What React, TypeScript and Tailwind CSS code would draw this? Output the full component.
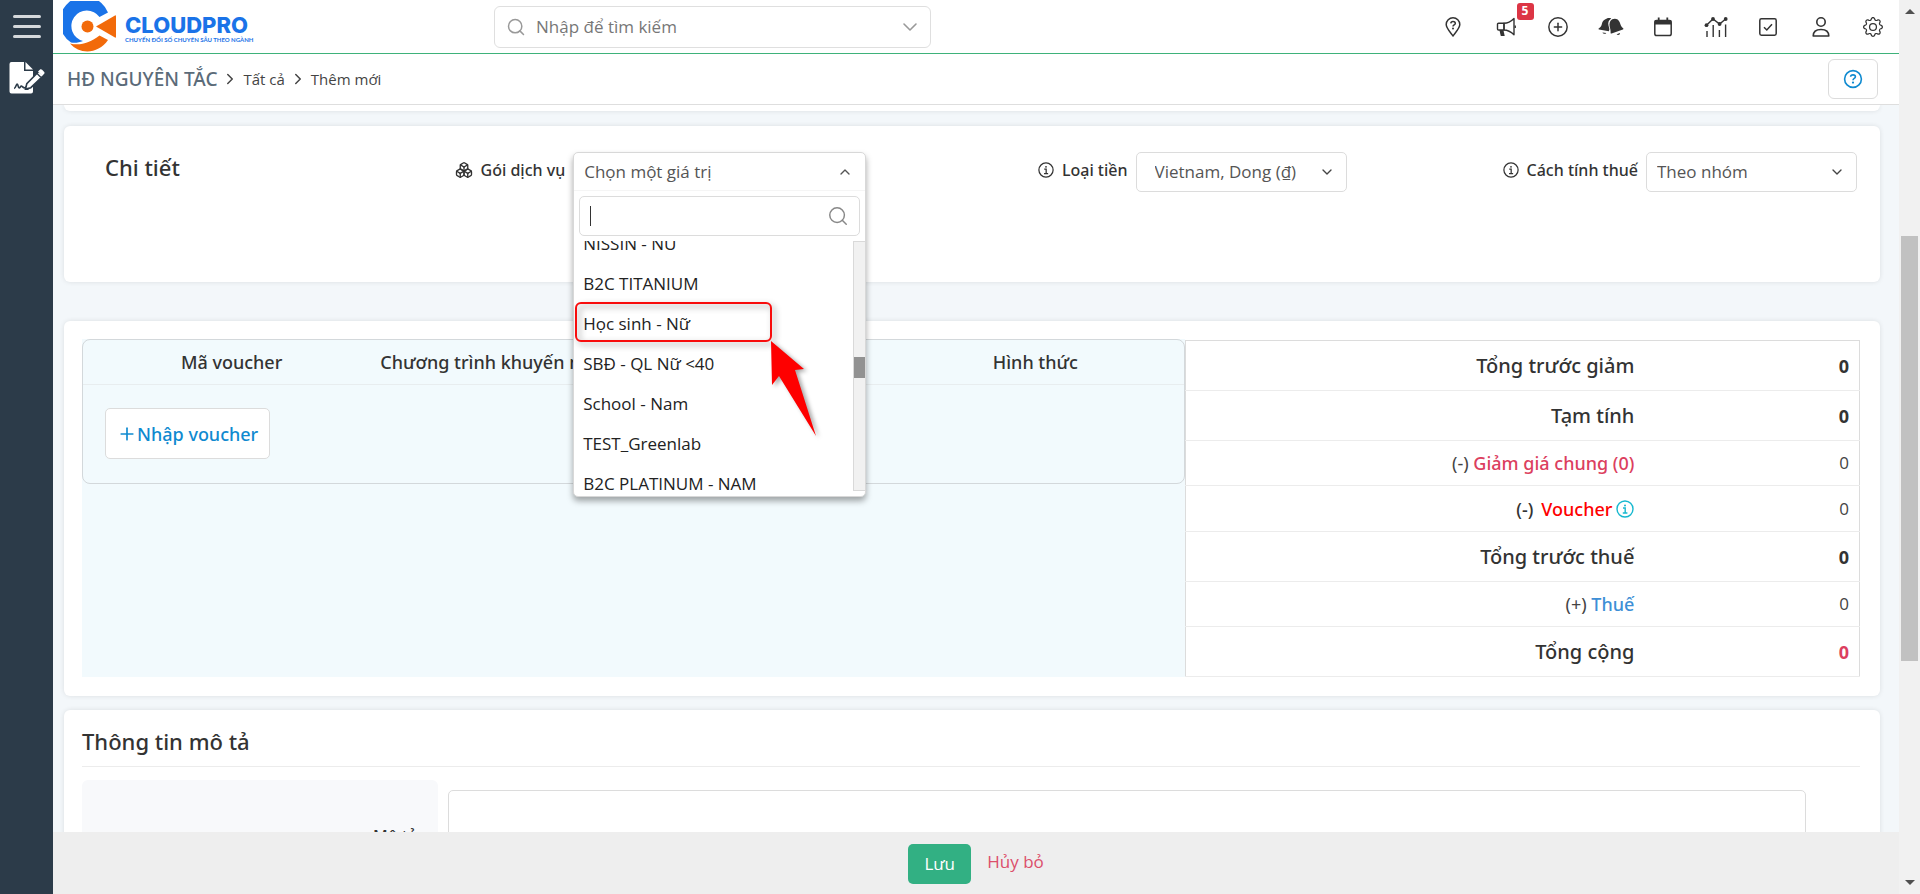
import { useEffect, useRef, useState } from "react";
import type { ReactNode } from "react";
import { Boxes, ChevronDown, ChevronRight, ChevronUp, CirclePlus, Plus, Search } from "lucide-react";
import { BsGear } from "react-icons/bs";

const packages = [
  "NISSIN - NỮ",
  "B2C TITANIUM",
  "Học sinh - Nữ",
  "SBĐ - QL Nữ <40",
  "School - Nam",
  "TEST_Greenlab",
  "B2C PLATINUM - NAM",
];

type IconProps = { className?: string };

const InfoIcon = ({ className }: IconProps) => (
  <svg viewBox="0 0 18 18" fill="none" stroke="currentColor" className={className}>
    <circle cx="9" cy="9" r="8" strokeWidth="1.4" />
    <path d="M7 8h2.2v5M6.8 13h4.6" strokeWidth="1.4" />
    <circle cx="9" cy="5.4" r="1" fill="currentColor" stroke="none" />
  </svg>
);

const HelpIcon = ({ className }: IconProps) => (
  <svg viewBox="0 0 20 20" fill="none" stroke="currentColor" className={className}>
    <circle cx="10" cy="10" r="8.4" strokeWidth="1.6" />
    <path d="M7.6 7.8c.1-1.3 1-1.9 2.4-1.9 1.5 0 2.4.8 2.4 1.9 0 1.6-2.4 1.6-2.4 3.4" strokeWidth="1.6" />
    <circle cx="10" cy="13.6" r="1.1" fill="currentColor" stroke="none" />
  </svg>
);

const PinIcon = () => (
  <svg viewBox="0 0 20 20" fill="none" stroke="currentColor" strokeWidth="1.5" className="size-5">
    <path d="M10 19C8.300 16.500 3.200 11.400 3.200 7.600a6.800 6.800 0 0 1 13.600 0c0 3.800-5.100 8.900-6.800 11.400z" strokeLinejoin="round" />
    <path d="M7.800 6.400c.1-1.300 1-1.900 2.200-1.900 1.400 0 2.300.8 2.300 1.900 0 1.500-2.300 1.500-2.300 3" />
    <circle cx="10" cy="11.400" r="1" fill="currentColor" stroke="none" />
  </svg>
);

const MegaphoneIcon = () => (
  <svg viewBox="0 0 20 20" fill="none" stroke="currentColor" strokeWidth="1.400" strokeLinejoin="round" className="size-5">
    <path d="M8 6.300H2.500a1 1 0 0 0-1 1V12a1 1 0 0 0 1 1H8z" />
    <path d="M8 6.300C12 6.300 15.500 4 18 1.500v16.200C15.500 15.300 12 13 8 13z" />
    <path d="M3.400 13h4l1.300 6H4.800z" fill="currentColor" stroke="none" />
    <path d="M19.200 8.400v2.600" />
  </svg>
);

const BellsIcon = () => (
  <svg viewBox="0 0 26 20" fill="currentColor" className="h-5 w-[26px]">
    <path d="M7 2.600C8.800 1 11 .6 13.200 1.400c-2.600 1.700-3.400 4-2.700 7 .6 2.700 1.500 4 .3 5.900L1 12.400c-.6-.2-.7-.9 0-1.200 2-1 2.500-2.300 3-4.600.4-1.700 1.200-3 3-4z" />
    <path d="M14.200 2.200c3-1.300 6.300-.3 7.400 2.900.9 2.600 1.400 4.700 3.500 6.200.5.400.4 1-.2 1.200l-11.300 4c-.6.200-1.100-.1-1-.8.200-2.100-.4-3.900-.9-6-.7-3 .2-6.300 2.500-7.500z" />
    <path d="M4.500 15.400l3.800.6c-.8 1.300-3 1.100-3.800-.6zM18.600 17.200l3.400-1.300c.2 1.800-2 2.700-3.400 1.300z" />
  </svg>
);

const CalendarIcon = () => (
  <svg viewBox="0 0 20 20" fill="none" className="size-5">
    <rect x="1.800" y="3.600" width="16.400" height="15" rx="1.800" stroke="currentColor" strokeWidth="1.500" />
    <path d="M1.800 3h16.400v4.400H1.800zM4.800.6h1.800V4H4.800zM13.400.6h1.800V4h-1.800z" fill="currentColor" />
  </svg>
);

const ChartIcon = () => (
  <svg viewBox="0 0 24 20" fill="none" stroke="currentColor" strokeWidth="1.400" className="h-5 w-6">
    <path d="M2.500 8.200L9 2l6.600 5 6-5" />
    <path d="M3 20v-6M9.200 20V8M15.400 20v-7M21.600 20V7.500" />
    <g fill="currentColor" stroke="none">
      <circle cx="2.500" cy="8.200" r="1.900" />
      <circle cx="9" cy="2" r="1.900" />
      <circle cx="15.600" cy="7" r="1.900" />
      <circle cx="21.700" cy="2" r="1.900" />
    </g>
  </svg>
);

const TaskIcon = () => (
  <svg viewBox="0 0 20 20" fill="none" stroke="currentColor" strokeWidth="1.500" className="size-5">
    <rect x="1.800" y="1.800" width="16.400" height="16.400" rx="1.600" />
    <path d="M6 10.200l2.800 2.800L14 7.200" />
  </svg>
);

const UserIcon = () => (
  <svg viewBox="0 0 20 20" fill="none" stroke="currentColor" strokeWidth="1.600" className="size-5">
    <circle cx="10" cy="5" r="4.200" />
    <path d="M2.200 19c0-4 2.500-6.500 7.800-6.500s7.800 2.500 7.800 6.500z" strokeLinejoin="round" />
  </svg>
);

const ContractIcon = () => (
  <svg viewBox="0 0 36 32" className="h-8 w-9">
    <path d="M2.500 0H15v9h9v8l-8 8v3h3l5-4v5.500a2 2 0 0 1-2 2H2.500a2 2 0 0 1-2-2V2a2 2 0 0 1 2-2z" fill="#fff" />
    <path d="M16.500 0L24 7.500h-7.500z" fill="#fff" />
    <path d="M5 26.500c2 0 2-4.500 3.200-4.500s.6 4 2 4c1 0 1.200-2 2.200-2s1 2 4 2" fill="none" stroke="#2c3b49" strokeWidth="1.600" />
    <path d="M16.500 27l1.300-5.300L30 9.300l4.500 4.200-12.700 12.200z" fill="#fff" stroke="#2c3b49" strokeWidth="1.600" />
    <path d="M29 9.500l1.800-1.700c.8-.7 1.600-.6 2.300 0l1.900 1.900c.7.700.7 1.500 0 2.300l-1.800 1.700z" fill="#fff" />
    <path d="M27.500 11l4.300 4.200" stroke="#2c3b49" strokeWidth="1.300" />
  </svg>
);

const navIcons: { label: string; icon: ReactNode; badge?: string }[] = [
  { label: "Địa điểm", icon: <PinIcon /> },
  { label: "Thông báo", icon: <MegaphoneIcon />, badge: "5" },
  { label: "Tạo nhanh", icon: <CirclePlus size={22} strokeWidth={1.6} /> },
  { label: "Nhắc nhở", icon: <BellsIcon /> },
  { label: "Lịch", icon: <CalendarIcon /> },
  { label: "Báo cáo", icon: <ChartIcon /> },
  { label: "Công việc", icon: <TaskIcon /> },
  { label: "Tài khoản", icon: <UserIcon /> },
  { label: "Cài đặt", icon: <BsGear size={20} /> },
];

const Logo = () => (
  <a href="#" className="flex items-center gap-2 pl-[10px]">
    <svg viewBox="0 0 54 51" className="h-[51px] w-[54px]">
      <path d="M45 11.500A25 25 0 1 0 8 41.500c4 .7 8 .2 12-1.500A15.500 15.500 0 1 1 36.500 16z" fill="#1a73e8" />
      <path d="M7 42.500c10 2.500 20-.5 29.500-8L45 39c-9.500 14-28 15-38 3.500z" fill="#f26a0a" />
      <circle cx="24.500" cy="25.500" r="6" fill="#f26a0a" />
      <path d="M33 25.500L52 14.500q1-.5 1 .7v20.600q0 1.200-1 .7z" fill="#f26a0a" />
    </svg>
    <span className="pt-1 text-[#1a73e8]">
      <span className="block font-[Inter] text-[22px] leading-[22px] font-extrabold">CLOUDPRO</span>
      <span className="block font-[Lato] text-[6px] leading-[8px] font-bold">CHUYỂN ĐỔI SỐ CHUYÊN SÂU THEO NGÀNH</span>
    </span>
  </a>
);

const Header = () => (
  <header className="flex h-[54px] shrink-0 items-center border-b border-[#3eb27a] bg-white">
    <div className="w-[441px] shrink-0">
      <Logo />
    </div>
    <label className="flex h-[42px] w-[437px] items-center rounded-md border border-[#dfdfdf] pr-2 pl-[11px] text-[#999]">
      <Search size={20} strokeWidth={1.8} className="shrink-0" />
      <input
        type="text"
        aria-label="Tìm kiếm"
        placeholder="Nhập để tìm kiếm"
        className="ml-[10px] min-w-0 flex-1 text-[17px] outline-none placeholder:text-[#777]"
      />
      <ChevronDown size={24} strokeWidth={1.6} />
    </label>
    <nav className="mr-[6px] ml-auto flex w-[460px] justify-between text-[#333]">
      {navIcons.map((n) => (
        <button key={n.label} aria-label={n.label} className="relative flex size-10 items-center justify-center">
          {n.icon}
          {n.badge && (
            <span className="absolute -top-1 -right-2 flex size-[17px] items-center justify-center rounded-[3px] bg-[#dc3545] text-xs font-bold text-white">
              {n.badge}
            </span>
          )}
        </button>
      ))}
    </nav>
  </header>
);

const Breadcrumb = () => (
  <div className="flex h-[51px] shrink-0 items-center border-b border-[#dedede] bg-white pl-[14px] pr-[21px] text-[#444]">
    <h1 className="font-['Noto_Sans'] text-[19px] leading-7 font-medium text-[#5b6b79]">HĐ NGUYÊN TẮC</h1>
    <ChevronRight size={18} className="mx-1" />
    <a href="#" className="text-[15px]">Tất cả</a>
    <ChevronRight size={18} className="mx-1" />
    <span className="text-[15px]">Thêm mới</span>
    <button aria-label="Trợ giúp" className="ml-auto flex h-10 w-[50px] items-center justify-center rounded-md border border-[#dcdcdc] text-[#0f8ad0]">
      <HelpIcon className="size-5" />
    </button>
  </div>
);

const PackageSelect = () => {
  const [open, setOpen] = useState(true);
  const listRef = useRef<HTMLUListElement>(null);

  useEffect(() => {
    if (listRef.current) listRef.current.scrollTop = 17;
  }, [open]);

  return (
    <div className="relative h-10 w-[293px]">
      <div className="absolute inset-x-0 top-0 z-20 rounded-[5px] border border-[#d8d8d8] bg-white shadow-[0_4px_6px_rgba(0,0,0,0.35)]">
        <button
          id="package"
          onClick={() => setOpen(!open)}
          className="flex h-[38px] w-full items-center justify-between border-b border-[#f5f5f5] pl-[10px] pr-3 text-[17px] text-[#555]"
        >
          Chọn một giá trị
          <ChevronUp size={16} />
        </button>
        {open && (
          <>
            <div className="mx-[5px] mt-[5px] flex h-10 items-center rounded-[5px] border border-[#dcdcdc] px-[10px]">
              <span className="h-5 w-px bg-[#333]" />
              <input type="text" aria-label="Tìm gói dịch vụ" className="min-w-0 flex-1 outline-none" />
              <Search size={22} strokeWidth={1.6} className="text-[#888]" />
            </div>
            <div className="mt-[5px] mb-[5px] flex h-[250px]">
              <ul ref={listRef} role="listbox" className="flex-1 overflow-y-scroll [scrollbar-width:none]">
                {packages.map((p) => (
                  <li key={p} role="option" className="flex h-10 items-center pl-[9px] text-[17px] text-[#222]">
                    {p}
                  </li>
                ))}
              </ul>
              <div className="w-3 border border-r-0 border-[#d9d9d9] bg-[#f1f1f1] pt-[115px]">
                <div className="h-[21px] bg-[#929292]" />
              </div>
            </div>
            {/* Highlight box and pointer over the chosen row */}
            <div className="absolute top-[149px] left-px h-10 w-[197px] rounded-md border-2 border-[#f80d0d] drop-shadow-[3px_3px_3px_rgba(0,0,0,0.4)]" />
            <svg viewBox="0 0 50 98" className="absolute top-[187px] left-[195px] h-[98px] w-[50px] drop-shadow-[3px_2px_2px_rgba(0,0,0,0.35)]">
              <path d="M2 1l33 28-9 1 21 66L10 36l-7 9z" fill="#fe0000" />
            </svg>
          </>
        )}
      </div>
    </div>
  );
};

const PlainSelect = ({ id, value, className }: { id: string; value: string; className: string }) => (
  <div className="relative">
    <select id={id} className={`h-10 w-[211px] appearance-none rounded-[5px] border border-[#dcdcdc] bg-white text-[17px] text-[#555] ${className}`}>
      <option>{value}</option>
    </select>
    <ChevronDown size={16} className="pointer-events-none absolute top-3 right-3 text-[#444]" />
  </div>
);

const FieldLabel = ({ htmlFor, children }: { htmlFor: string; children: ReactNode }) => (
  <label htmlFor={htmlFor} className="flex h-9 items-center gap-2 pr-2 font-['Noto_Sans'] text-base font-medium whitespace-nowrap text-[#333]">
    {children}
  </label>
);

const DetailCard = () => (
  <section className="grid h-[156px] grid-cols-[391fr_584fr_307fr_511fr] rounded-md bg-white pt-[26px] pr-[23px] shadow-[0_0_5px_rgba(0,0,0,0.1)]">
    <h2 className="pl-[41px] font-['Noto_Sans'] text-[22px] leading-[30px] font-medium text-[#333]">Chi tiết</h2>
    <div className="flex items-start">
      <FieldLabel htmlFor="package">
        <Boxes size={18} strokeWidth={1.8} />
        Gói dịch vụ
      </FieldLabel>
      <PackageSelect />
    </div>
    <div className="flex items-start">
      <FieldLabel htmlFor="currency">
        <InfoIcon className="size-4" />
        Loại tiền
      </FieldLabel>
      <PlainSelect id="currency" value="Vietnam, Dong (₫)" className="pl-[18px]" />
    </div>
    <div className="flex items-start justify-self-end">
      <FieldLabel htmlFor="tax">
        <InfoIcon className="size-4" />
        Cách tính thuế
      </FieldLabel>
      <PlainSelect id="tax" value="Theo nhóm" className="pl-[10px]" />
    </div>
  </section>
);

const VoucherPanel = () => (
  <div className="bg-[#f2fafd]">
    <div className="rounded-lg border border-[#d3d8db]">
      <table className="w-full table-fixed font-['Noto_Sans']">
        <colgroup>
          <col className="w-[27%]" />
          <col className="w-[20%]" />
          <col className="w-[26%]" />
          <col className="w-[27%]" />
        </colgroup>
        <thead>
          <tr className="h-[44px] border-b border-[#e8edef] text-lg leading-6 whitespace-nowrap text-[#333]">
            <th className="font-medium">Mã voucher</th>
            <th className="font-medium">Chương trình khuyến mãi</th>
            <th />
            <th className="font-medium">Hình thức</th>
          </tr>
        </thead>
        <tbody>
          <tr className="h-[99px]">
            <td colSpan={4} className="pl-[22px]">
              <button className="flex h-[51px] items-center rounded-[5px] border border-[#dcdcdc] bg-white px-[11px] text-lg font-medium text-[#0f8ad0]">
                <Plus size={20} />
                Nhập voucher
              </button>
            </td>
          </tr>
        </tbody>
      </table>
    </div>
  </div>
);

const TotalRow = ({ label, valueClass = "text-[#333]" }: { label: string; valueClass?: string }) => (
  <tr className="h-[50px] border-b border-[#ececec]">
    <th className="text-right font-['Noto_Sans'] text-xl font-medium text-[#333]">{label}</th>
    <td className={`pr-[10px] text-right text-lg font-bold ${valueClass}`}>0</td>
  </tr>
);

const SubRow = ({ children }: { children: ReactNode }) => (
  <tr className="h-[45px] border-b border-[#ececec]">
    <th className="text-right font-['Noto_Sans'] text-lg font-normal text-[#444]">{children}</th>
    <td className="pr-[10px] text-right text-[17px] text-[#444]">0</td>
  </tr>
);

const TotalsTable = () => (
  <table className="mt-px w-full table-fixed border border-b-0 border-[#dcdcdc]">
    <colgroup>
      <col className="w-[66.600%]" />
      <col />
    </colgroup>
    <tbody>
      <TotalRow label="Tổng trước giảm" />
      <TotalRow label="Tạm tính" />
      <SubRow>
        (-) <a href="#" className="font-medium text-[#dc3f5f]">Giảm giá chung (0)</a>
      </SubRow>
      <SubRow>
        <span className="flex h-[45px] items-center justify-end font-medium">
          <span className="mr-2 text-[#333]">(-)</span>
          <span className="text-[#fe0000]">Voucher</span>
          <InfoIcon className="ml-1 size-[18px] text-[#17b8cf]" />
        </span>
      </SubRow>
      <TotalRow label="Tổng trước thuế" />
      <SubRow>
        (+) <a href="#" className="font-medium text-[#3d8fd6]">Thuế</a>
      </SubRow>
      <TotalRow label="Tổng cộng" valueClass="text-[#dc3f5f]" />
    </tbody>
  </table>
);

const App = () => (
  <div className="flex h-screen overflow-hidden bg-white font-['Open_Sans',sans-serif]">
    <aside className="flex w-[53px] shrink-0 flex-col items-center bg-[#2c3b49] pt-[15px]">
      <button aria-label="Menu" className="flex flex-col gap-[7px]">
        <span className="h-[3px] w-7 rounded-full bg-[#d5d8db]" />
        <span className="h-[3px] w-7 rounded-full bg-[#d5d8db]" />
        <span className="h-[3px] w-7 rounded-full bg-[#d5d8db]" />
      </button>
      <a href="#" aria-label="Hợp đồng" className="mt-6">
        <ContractIcon />
      </a>
    </aside>

    <div className="flex min-w-0 flex-1 flex-col">
      <Header />
      <Breadcrumb />
      <main className="flex-1 overflow-hidden bg-[#f3f7fa] pr-[19px] pl-[11px]">
        <div className="mb-[15px] h-[6px] rounded-b-md bg-white shadow-[0_0_5px_rgba(0,0,0,0.1)]" />
        <DetailCard />

        <section className="mt-[39px] grid grid-cols-[1103fr_675fr] rounded-md bg-white pt-[18px] pr-5 pb-[19px] pl-[18px] shadow-[0_0_5px_rgba(0,0,0,0.1)]">
          <VoucherPanel />
          <TotalsTable />
        </section>

        <section className="mt-[14px] rounded-md bg-white pt-4 pr-5 pl-[18px] shadow-[0_0_5px_rgba(0,0,0,0.1)]">
          <h2 className="border-b border-[#ececec] pb-[10px] font-['Noto_Sans'] text-[22px] leading-[30px] font-medium text-[#333]">
            Thông tin mô tả
          </h2>
          <div className="mt-[13px] flex gap-[10px] pr-[54px]">
            <label htmlFor="description" className="w-[356px] rounded-md bg-[#f8f9fb] pt-[44px] pr-[21px] text-right font-['Noto_Sans'] text-base font-medium text-[#333]">
              Mô tả
            </label>
            <textarea id="description" className="mt-[10px] h-24 flex-1 resize-none rounded-[5px] border border-[#dcdcdc]" />
          </div>
        </section>
      </main>

      <footer className="z-30 flex h-[62px] shrink-0 items-start justify-center gap-4 bg-[#eee] pt-3">
        <button className="h-10 w-[63px] rounded-[5px] bg-[#32b083] text-[17px] text-white">Lưu</button>
        <button className="h-9 text-[17px] text-[#dc4f6b]">Hủy bỏ</button>
      </footer>
    </div>

    {/* Page scrollbar */}
    <div className="flex w-[21px] shrink-0 flex-col items-center justify-between bg-[#f1f1f1] py-[9px]">
      <svg viewBox="0 0 10 5" className="h-[5px] w-[10px]">
        <path d="M0 5l5-5 5 5z" fill="#505050" />
      </svg>
      <div className="mt-[222px] mb-auto h-[425px] w-[17px] bg-[#c1c1c1]" />
      <svg viewBox="0 0 10 5" className="h-[5px] w-[10px]">
        <path d="M0 0l5 5 5-5z" fill="#505050" />
      </svg>
    </div>
  </div>
);

export default App;
